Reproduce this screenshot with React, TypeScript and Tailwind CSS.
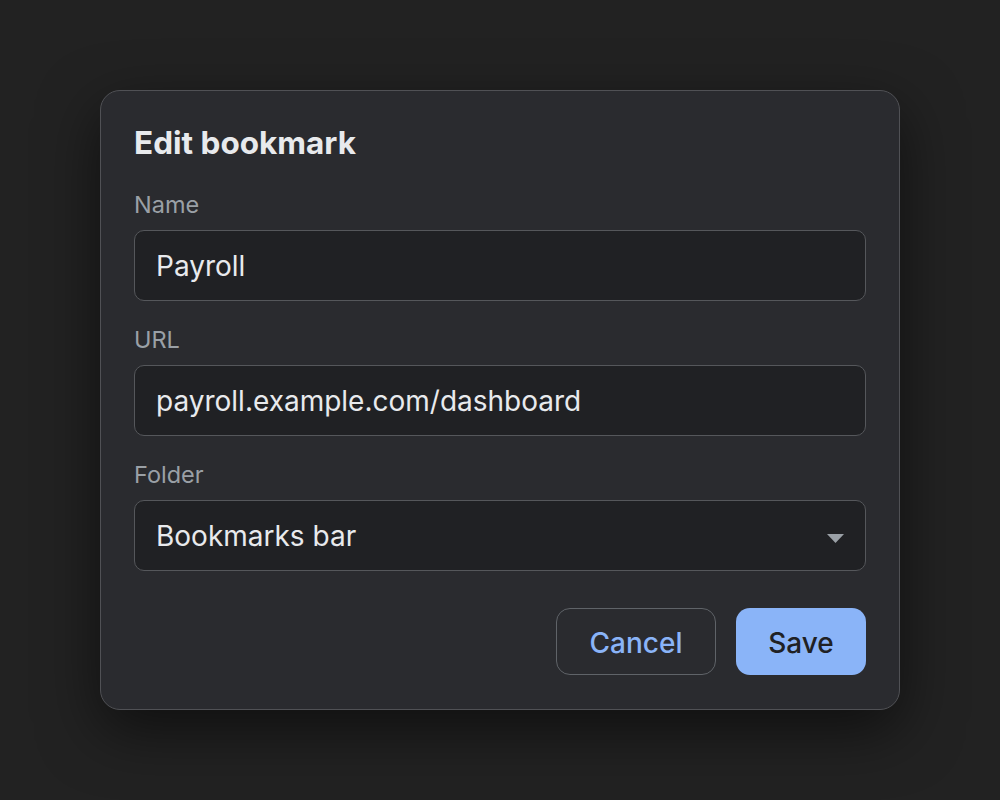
import React from "react";

const Field: React.FC<{ label: string; value: string; select?: boolean }> = ({
  label,
  value,
  select,
}) => (
  <div className="flex flex-col">
    <label className="text-[23.5px] leading-[28px] text-[#9aa0a6] mb-[11px]">{label}</label>
    <div className="relative h-[71px] rounded-[10px] border border-[#55575b] bg-[#202124] flex items-center pl-[21px] pr-[20px]">
      <span className="text-[28px] text-[#e8eaed]">{value}</span>
      {select && (
        <svg
          className="absolute right-[21px] top-[33px]"
          width="17"
          height="9"
          viewBox="0 0 17 9"
        >
          <path d="M0 0 L17 0 L8.5 9 Z" fill="#9aa0a6" />
        </svg>
      )}
    </div>
  </div>
);

export default function App() {
  return (
    <div
      className="w-[1000px] h-[800px] bg-[#222222] flex items-start justify-center pt-[90px]"
      style={{ fontFamily: "Inter, 'Noto Sans', sans-serif" }}
    >
      <div className="w-[800px] h-[620px] rounded-[20px] border border-[#505155] bg-[#2a2b2f] shadow-[0_20px_60px_rgba(0,0,0,0.55)] px-[33px] pt-[32px]">
        <h1 className="text-[31.5px] leading-[40px] font-bold text-[#e8eaed] mb-[28px]">
          Edit bookmark
        </h1>
        <div className="flex flex-col gap-[25px]">
          <Field label="Name" value="Payroll" />
          <Field label="URL" value="payroll.example.com/dashboard" />
          <Field label="Folder" value="Bookmarks bar" select />
        </div>
        <div className="flex justify-end gap-[20px] mt-[37px]">
          <button className="w-[160px] h-[67px] pt-[3px] rounded-[14px] border border-[#5f6368] text-[28px] font-medium text-[#8ab4f8]">
            Cancel
          </button>
          <button className="w-[130px] h-[67px] pt-[3px] rounded-[14px] bg-[#8ab4f8] text-[28px] font-medium text-[#202124]">
            Save
          </button>
        </div>
      </div>
    </div>
  );
}
